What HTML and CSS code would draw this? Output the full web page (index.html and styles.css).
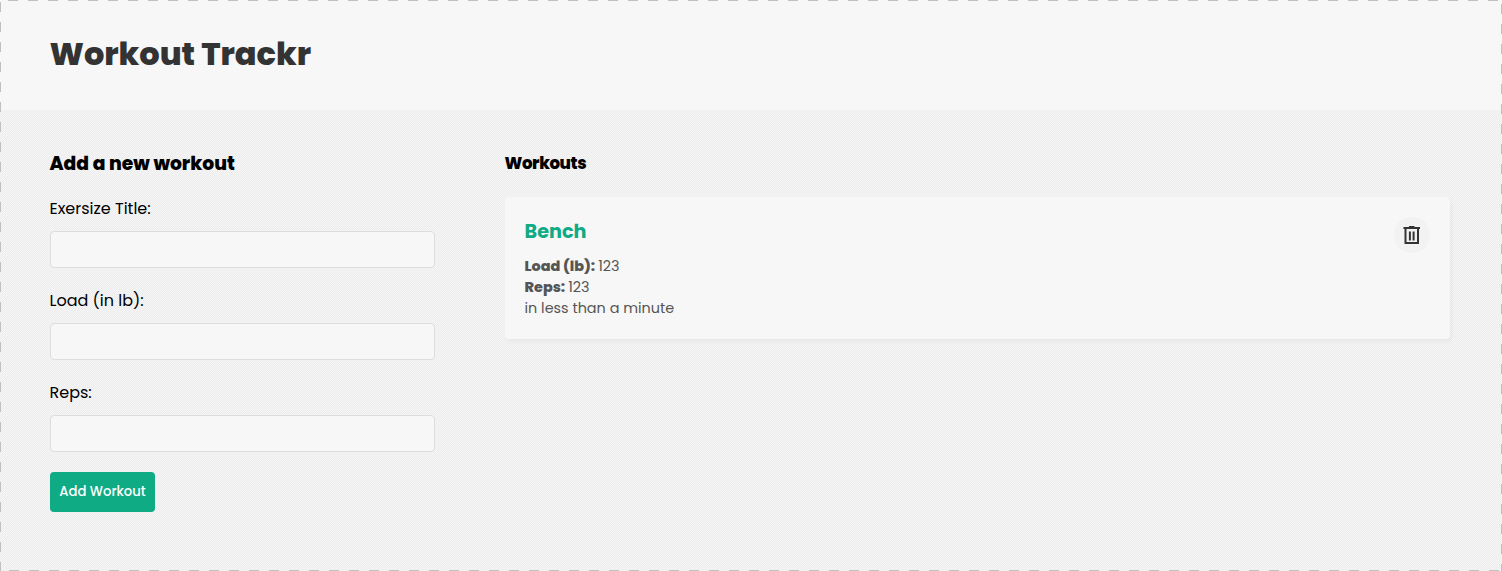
FILE: index.html
```html
<!DOCTYPE html>
<html lang="en">
<head>
<meta charset="utf-8">
<title>Workout Trackr</title>
<link rel="stylesheet" href="styles.css">
</head>
<body>
<div class="app">
<header class="header"><h1 class="brand">Workout Trackr</h1></header>
<main class="page">
<form class="form">
<h2 class="form-title">Add a new workout</h2>
<label class="label" for="title">Exersize Title:</label>
<input class="input" id="title" type="text">
<label class="label" for="load">Load (in lb):</label>
<input class="input" id="load" type="text">
<label class="label" for="reps">Reps:</label>
<input class="input" id="reps" type="text">
<button class="submit" type="button">Add Workout</button>
</form>
<section class="workouts">
<h2 class="list-title">Workouts</h2>
<article class="card">
<div class="details">
<h3 class="name">Bench</h3>
<p class="row"><strong class="key">Load (lb):</strong><span>123</span></p>
<p class="row"><strong class="key">Reps:</strong><span>123</span></p>
<p class="row">in less than a minute</p>
</div>
<button class="delete" type="button" aria-label="Delete"><svg width="24" height="24" viewBox="0 0 24 24" fill="none" stroke="#333" stroke-width="2"><path d="M3.5 5H20M9 4h5.5M5.5 5v15H18V5M9.9 8.5v9M13.6 8.5v9"/></svg></button>
</article>
</section>
</main>
<div class="frame"></div>
</div>
</body>
</html>
```
FILE: styles.css
```css
* { box-sizing: border-box; margin: 0; padding: 0; }
body { font-family: Poppins, Inter, "Open Sans", sans-serif; color: #000; }
.app { position: relative; height: 571px; overflow: hidden; background: repeating-conic-gradient(#ededed 0 25%, #f5f5f5 0 50%) 0 0 / 2px 2px; }
.header { height: 110px; padding: 29px 49.5px; background: #f7f7f7; }
.brand { font-size: 32px; line-height: 49px; font-weight: 800; color: #333; white-space: nowrap; }
.page { display: grid; grid-template-columns: 385px 945.5px; column-gap: 69.5px; padding: 38px 50px 0; }
.form { display: flex; flex-direction: column; align-items: flex-start; }
.form-title { font-size: 18.72px; line-height: 30px; font-weight: 800; margin: 1px 0 18px -0.5px; }
.label { font-size: 16px; line-height: 24px; margin: 0 0 10px -0.5px; }
.input { width: 385px; height: 37px; border: 1px solid #ddd; border-radius: 4px; background: #f7f7f7; margin-bottom: 21px; padding: 10px; }
.submit { width: 105px; height: 40px; margin-top: -1px; padding-bottom: 1px; border: 0; border-radius: 4px; background: #0fab84; color: #fff; font: 500 13.2px/38px Poppins, Inter, sans-serif; white-space: nowrap; }
.list-title { font-size: 16.6px; line-height: 30px; font-weight: 800; letter-spacing: -0.4px; padding-top: 1px; }
.card { display: flex; justify-content: space-between; margin-top: 18px; height: 142px; padding: 20px; background: #f7f7f7; border-radius: 4px; box-shadow: 2px 3px 5px rgba(0,0,0,.04); }
.name { font-size: 19.2px; line-height: 29px; font-weight: 700; color: #0fab84; margin-bottom: 10px; }
.row { display: flex; gap: 3px; font-size: 14.4px; line-height: 21px; color: #555; }
.key { font-weight: 800; }
.delete { display: flex; align-items: center; justify-content: center; width: 36px; height: 36px; border: 0; border-radius: 50%; background: #f2f2f2; }
.frame { position: absolute; inset: 0; pointer-events: none; background:
 repeating-linear-gradient(90deg, #c0c0c0 0 10px, transparent 10px 20px) 8px 0 / 1500px 1px repeat-x,
 repeating-linear-gradient(90deg, #c0c0c0 0 10px, transparent 10px 20px) 9px 100% / 1500px 1px repeat-x,
 repeating-linear-gradient(#c0c0c0 0 10px, transparent 10px 20px) 0 2px / 1px 580px repeat-y,
 repeating-linear-gradient(#c0c0c0 0 10px, transparent 10px 20px) 100% 4px / 1px 580px repeat-y; }
```
